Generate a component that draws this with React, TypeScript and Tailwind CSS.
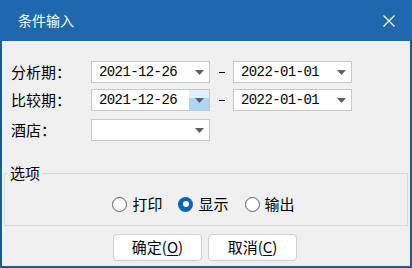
import React from "react";

const cjk = "font-['Noto_Sans_CJK_SC',sans-serif]";
const mono = "font-['Liberation_Mono','Noto_Sans_CJK_SC',monospace]";

function Arrow() {
  return (
    <svg width="9" height="5" viewBox="0 0 9 5" className="block">
      <path d="M0 0H9L4.5 5Z" fill="#606060" />
    </svg>
  );
}

function Combo({ value, hot }: { value: string; hot?: boolean }) {
  return (
    <div className="flex h-[22px] w-[119px] items-stretch border border-[#c8c8c8] bg-white">
      <div className={`flex-1 pl-[7px] text-[14px] leading-[20px] tracking-[-0.6px] text-black ${mono}`}>{value}</div>
      {hot ? (
        <div className="flex w-[20px] flex-col">
          <div className="h-[8px] bg-[#dcf1fc]" />
          <div className="flex-1 bg-[#abd6f6]" />
        </div>
      ) : null}
      <div className={`flex w-[20px] items-center justify-center ${hot ? "-ml-[20px]" : ""}`}>
        <Arrow />
      </div>
    </div>
  );
}

function Row({ label, from, to, hot, mt }: { label: string; from: string; to?: string; hot?: boolean; mt: string }) {
  return (
    <div className={`flex items-center ${mt}`}>
      <div className={`w-[80px] text-[15px] leading-[22px] text-black ${cjk}`}>{label}</div>
      <Combo value={from} hot={hot} />
      {to !== undefined ? (
        <>
          <div className="flex w-[23px] justify-center">
            <div className="h-px w-[6px] bg-black" />
          </div>
          <Combo value={to} />
        </>
      ) : null}
    </div>
  );
}

function Radio({ label, checked }: { label: string; checked?: boolean }) {
  return (
    <div className="flex items-center gap-[5px]">
      {checked ? (
        <div className="flex h-[15px] w-[15px] items-center justify-center rounded-full bg-[#0a63c0]">
          <div className="h-[6px] w-[6px] rounded-full bg-white" />
        </div>
      ) : (
        <div className="h-[15px] w-[15px] rounded-full border border-[#5a5a5a] bg-white" />
      )}
      <span className={`text-[15px] leading-[20px] text-black ${cjk}`}>{label}</span>
    </div>
  );
}

function Btn({ text, key1 }: { text: string; key1: string }) {
  return (
    <button className={`flex h-[27px] w-[89px] items-center justify-center rounded-[4px] border border-[#cfcfcf] bg-white text-[15px] text-black ${cjk}`}>
      {text}(<span className="underline underline-offset-2">{key1}</span>)
    </button>
  );
}

export default function App() {
  return (
    <div className="flex h-[268px] w-[412px] flex-col bg-[#1d5b97]">
      <div className="flex h-[41px] items-center justify-between bg-[#2068ae] pl-[18px] pr-[17px]">
        <span className={`text-[14px] text-white ${cjk}`}>条件输入</span>
        <svg width="12" height="12" viewBox="0 0 12 12">
          <path d="M0.5 0.5L11.5 11.5M11.5 0.5L0.5 11.5" stroke="#fff" strokeWidth="1.2" />
        </svg>
      </div>
      <div className="mx-[2px] mb-[2px] flex flex-1 flex-col bg-[#f0f0f0]">
        <div className="pl-[9px] pt-[20px]">
          <Row label="分析期：" from="2021-12-26" to="2022-01-01" mt="" />
          <Row label="比较期：" from="2021-12-26" to="2022-01-01" hot mt="mt-[6px]" />
          <Row label="酒店：" from="" mt="mt-[8px]" />
        </div>
        <fieldset className="mx-[2px] mt-[22px] h-[63px] border border-[#d9d9d9] pl-[3px]">
          <legend className={`px-[2px] text-[15px] leading-[20px] text-black ${cjk}`}>选项</legend>
          <div className="flex h-[42px] items-center justify-center gap-[16px] pr-[8px]">
            <Radio label="打印" />
            <Radio label="显示" checked />
            <Radio label="输出" />
          </div>
        </fieldset>
        <div className="mt-[8px] flex justify-center gap-[6px] pr-[2px]">
          <Btn text="确定" key1="O" />
          <Btn text="取消" key1="C" />
        </div>
      </div>
    </div>
  );
}
